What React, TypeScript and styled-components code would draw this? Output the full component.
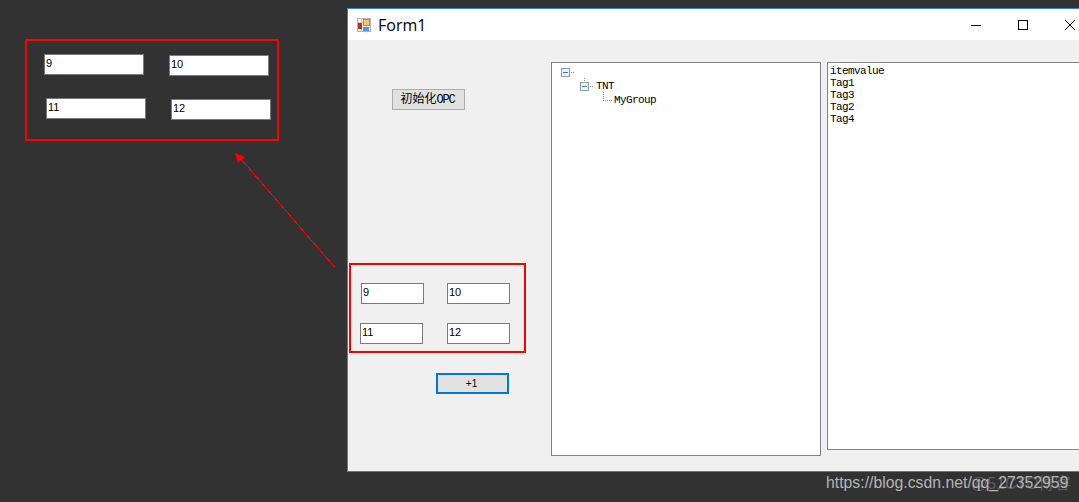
import * as React from "react";
import styled, { createGlobalStyle } from "styled-components";

const GlobalStyle = createGlobalStyle`
  html, body {
    margin: 0;
    padding: 0;
    background: #323232;
  }
`;

const Desktop = styled.div`
  position: relative;
  width: 1079px;
  height: 502px;
  overflow: hidden;
  display: flex;
  background: #323232;
`;

const LeftArea = styled.div`
  flex: 0 0 347px;
  box-sizing: border-box;
  padding: 39px 0 0 25px;
`;

const RedBox = styled.div<{ $w: number; $h: number; $cols: string; $rowH: number; $pad: string }>`
  box-sizing: border-box;
  width: ${(p) => p.$w}px;
  height: ${(p) => p.$h}px;
  border: 2px solid #fe0000;
  padding: ${(p) => p.$pad};
  display: grid;
  grid-template-columns: ${(p) => p.$cols};
  grid-auto-rows: ${(p) => p.$rowH}px;
`;

const Field = styled.div<{ $w: number; $ml?: number; $mt?: number }>`
  box-sizing: border-box;
  width: ${(p) => p.$w}px;
  height: 21px;
  margin-left: ${(p) => p.$ml ?? 0}px;
  margin-top: ${(p) => p.$mt ?? 0}px;
  background: #fff;
  border: 1px solid #7a7a7a;
  padding: 1px 1px;
  font: 11px/14px "Liberation Sans", Arial, sans-serif;
  color: #000;
`;

const Window = styled.div`
  flex: 0 0 747px;
  min-width: 0;
  box-sizing: border-box;
  height: 464px;
  margin-top: 8px;
  border: 1px solid #2b87cf;
  display: flex;
  flex-direction: column;
  background: #f0f0f0;
`;

const TitleBar = styled.div`
  flex: 0 0 31px;
  display: flex;
  align-items: center;
  background: #fff;
  padding-left: 9px;
`;

const TitleText = styled.div`
  margin-left: 7px;
  font: 16px "Open Sans", "Noto Sans", sans-serif;
  color: #000;
`;

const Controls = styled.div`
  margin-left: auto;
  display: flex;
`;

const ControlButton = styled.div`
  width: 47px;
  height: 31px;
  display: flex;
  align-items: center;
  justify-content: center;
`;

const Client = styled.div`
  flex: 1;
  display: flex;
  align-items: flex-start;
`;

const LeftColumn = styled.div`
  flex: 0 0 203px;
  display: flex;
  flex-direction: column;
  align-items: flex-start;
  padding-top: 49px;
`;

const InitButton = styled.div`
  box-sizing: border-box;
  width: 73px;
  height: 21px;
  margin-left: 44px;
  margin-bottom: 153px;
  padding: 0 2px 1px 0;
  background: #e1e1e1;
  border: 1px solid #adadad;
  display: flex;
  align-items: center;
  justify-content: center;
  color: #000;
`;

const InitLabel = styled.span`
  font: 12px/16px "Liberation Mono", monospace;
  letter-spacing: -1.2px;
  white-space: nowrap;
`;

const Cjk = styled.span`
  font: 12px/16px "Noto Sans CJK SC", sans-serif;
  letter-spacing: 0;
`;

const FormBox = styled.div`
  margin-left: 1px;
`;

const PlusButton = styled.div`
  box-sizing: border-box;
  width: 73px;
  height: 21px;
  margin: 20px 0 0 88px;
  padding-right: 2px;
  background: #e1e1e1;
  border: 2px solid #0078d7;
  display: flex;
  align-items: center;
  justify-content: center;
  font: 10px "Liberation Sans", Arial, sans-serif;
  color: #000;
`;

const TreePanel = styled.div`
  box-sizing: border-box;
  width: 270px;
  height: 394px;
  margin-top: 22px;
  background: #fff;
  border: 1px solid #82828c;
  padding: 3px 0 0 9px;
`;

const TreeRow = styled.div<{ $indent: number }>`
  height: 14px;
  padding-left: ${(p) => p.$indent}px;
  display: flex;
  align-items: center;
`;

const TreeLabel = styled.span`
  font: 11px/12px "Liberation Mono", monospace;
  letter-spacing: -0.6px;
  color: #000;
  margin-top: -2px;
`;

const ListPanel = styled.div`
  box-sizing: border-box;
  flex: 0 0 262px;
  height: 388px;
  margin: 22px 0 0 6px;
  background: #fff;
  border: 1px solid #82828c;
  padding: 2px 2px;
`;

const ListItem = styled.div`
  font: 11px/12px "Liberation Mono", monospace;
  letter-spacing: -0.6px;
  color: #000;
`;

const ArrowLayer = styled.svg`
  position: absolute;
  left: 0;
  top: 0;
  pointer-events: none;
`;

const Watermark = styled.div`
  position: absolute;
  left: 826px;
  top: 473px;
  font: 15.8px/20px "Liberation Sans", Arial, sans-serif;
  color: #b4b4b4;
  white-space: nowrap;
`;

const WatermarkGhost = styled.div`
  position: absolute;
  left: 971px;
  top: 474px;
  font: 16px/20px "Liberation Sans", "Noto Sans CJK SC", sans-serif;
  color: rgba(180, 180, 180, 0.35);
  white-space: nowrap;
`;

const FormIcon = () => (
  <svg width="14" height="14" viewBox="0 0 14 14" shapeRendering="crispEdges">
    <rect x="0.5" y="0.5" width="13" height="13" fill="#f4f4f4" stroke="#b0b0b0" />
    <path d="M0 4.5h14M0 9.5h14M4.5 0v14M9.5 0v14" stroke="#c8c8c8" fill="none" />
    <rect x="6.5" y="1.5" width="6" height="6" fill="#fbc66c" stroke="#c88a20" strokeWidth="1" />
    <rect x="1" y="5" width="4" height="6" fill="#b8341a" />
    <rect x="6" y="9" width="6" height="4" fill="#4a9ade" />
  </svg>
);

const MinimizeIcon = () => (
  <svg width="10" height="10" viewBox="0 0 10 10" shapeRendering="crispEdges">
    <path d="M0 5.5h10" stroke="#000" />
  </svg>
);

const MaximizeIcon = () => (
  <svg width="10" height="10" viewBox="0 0 10 10" shapeRendering="crispEdges">
    <rect x="0.5" y="0.5" width="9" height="9" fill="none" stroke="#000" />
  </svg>
);

const CloseIcon = () => (
  <svg width="10" height="10" viewBox="0 0 10 10">
    <path d="M0 0l10 10M10 0L0 10" stroke="#000" strokeWidth="1" />
  </svg>
);

const Expander = ({ up }: { up?: boolean }) => (
  <svg width="16" height="14" viewBox="0 0 16 14" shapeRendering="crispEdges" style={{ overflow: "visible", flex: "none" }}>
    {up && <path d="M4.5 -2v4" stroke="#8a8a8a" strokeDasharray="1 1" />}
    <rect x="0.5" y="2.5" width="8" height="8" fill="#eef1f4" stroke="#9a9a9a" />
    <path d="M2 6.5h5" stroke="#2a7fc9" />
    <path d="M10 6.5h4" stroke="#8a8a8a" strokeDasharray="1 1" />
  </svg>
);

const LeafLine = () => (
  <svg width="16" height="14" viewBox="0 0 16 14" shapeRendering="crispEdges" style={{ overflow: "visible", flex: "none" }}>
    <path d="M5.5 -2v8.5h9" stroke="#8a8a8a" strokeDasharray="1 1" fill="none" />
  </svg>
);

const App = () => {
  return (
    <Desktop>
      <GlobalStyle />
      <LeftArea>
        <RedBox $w={254} $h={102} $cols="125px 1fr" $rowH={44} $pad="13px 0 0 17px">
          <Field $w={100}>9</Field>
          <Field $w={100} $mt={1}>10</Field>
          <Field $w={100} $ml={2}>11</Field>
          <Field $w={100} $ml={2} $mt={1}>12</Field>
        </RedBox>
      </LeftArea>
      <Window>
        <TitleBar>
          <FormIcon />
          <TitleText>Form1</TitleText>
          <Controls>
            <ControlButton><MinimizeIcon /></ControlButton>
            <ControlButton><MaximizeIcon /></ControlButton>
            <ControlButton><CloseIcon /></ControlButton>
          </Controls>
        </TitleBar>
        <Client>
          <LeftColumn>
            <InitButton><InitLabel><Cjk>初始化</Cjk>OPC</InitLabel></InitButton>
            <FormBox>
              <RedBox $w={177} $h={90} $cols="87px 1fr" $rowH={40} $pad="18px 0 0 9px">
                <Field $w={63} $ml={1}>9</Field>
                <Field $w={63}>10</Field>
                <Field $w={63}>11</Field>
                <Field $w={63}>12</Field>
              </RedBox>
            </FormBox>
            <PlusButton>+1</PlusButton>
          </LeftColumn>
          <TreePanel>
            <TreeRow $indent={0}><Expander /></TreeRow>
            <TreeRow $indent={19}><Expander up /><TreeLabel>TNT</TreeLabel></TreeRow>
            <TreeRow $indent={37}><LeafLine /><TreeLabel>MyGroup</TreeLabel></TreeRow>
          </TreePanel>
          <ListPanel>
            <ListItem>itemvalue</ListItem>
            <ListItem>Tag1</ListItem>
            <ListItem>Tag3</ListItem>
            <ListItem>Tag2</ListItem>
            <ListItem>Tag4</ListItem>
          </ListPanel>
        </Client>
      </Window>
      <ArrowLayer width="1079" height="502" viewBox="0 0 1079 502">
        <path d="M334.5 267L241 159" stroke="#fe0000" strokeWidth="1" fill="none" shapeRendering="crispEdges" />
        <path d="M235 153L245 157L238 163Z" fill="#fe0000" />
      </ArrowLayer>
      <WatermarkGhost>@51CTO博客</WatermarkGhost>
      <Watermark>https://blog.csdn.net/qq_27352959</Watermark>
    </Desktop>
  );
};

export default App;
